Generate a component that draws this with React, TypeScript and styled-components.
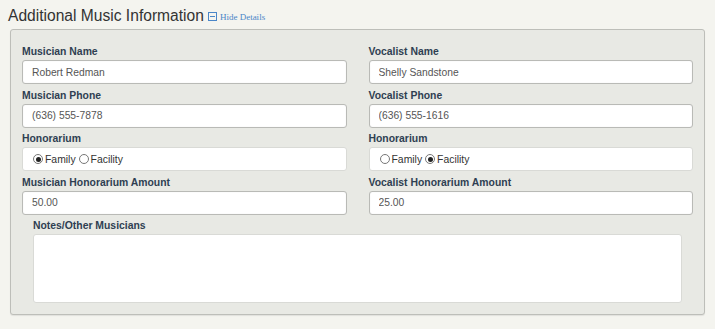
import React, { FunctionComponent } from 'react';
import styled, { createGlobalStyle } from 'styled-components';

const GlobalStyle = createGlobalStyle`
  html, body {
    margin: 0;
    padding: 0;
    background: #f4f4ef;
  }
  body {
    font-family: "Liberation Sans", Arial, sans-serif;
  }
`;

interface IRadioProps {
  checked?: boolean;
}

const Radio: FunctionComponent<IRadioProps & { label: string }> = ({ checked, label }) => (
  <RadioLabel>
    <RadioDot checked={checked} />
    {label}
  </RadioLabel>
);

interface IFieldProps {
  label: string;
  value: string;
}

const Field: FunctionComponent<IFieldProps> = ({ label, value }) => (
  <FieldBlock>
    <Label>{label}</Label>
    <TextInput readOnly value={value} />
  </FieldBlock>
);

const App: FunctionComponent = () => (
  <Page>
    <GlobalStyle />
    <TitleRow>
      <Title>Additional Music Information</Title>
      <HideLink href="#">
        <ToggleIcon />
        Hide Details
      </HideLink>
    </TitleRow>
    <Panel>
      <Columns>
        <div>
          <Field label="Musician Name" value="Robert Redman" />
          <Field label="Musician Phone" value="(636) 555-7878" />
          <FieldBlock>
            <Label>Honorarium</Label>
            <RadioBox>
              <Radio checked label="Family" />
              <Radio label="Facility" />
            </RadioBox>
          </FieldBlock>
          <Field label="Musician Honorarium Amount" value="50.00" />
        </div>
        <div>
          <Field label="Vocalist Name" value="Shelly Sandstone" />
          <Field label="Vocalist Phone" value="(636) 555-1616" />
          <FieldBlock>
            <Label>Honorarium</Label>
            <RadioBox>
              <Radio label="Family" />
              <Radio checked label="Facility" />
            </RadioBox>
          </FieldBlock>
          <Field label="Vocalist Honorarium Amount" value="25.00" />
        </div>
      </Columns>
      <Notes>
        <Label>Notes/Other Musicians</Label>
        <TextArea />
      </Notes>
    </Panel>
  </Page>
);

const Page = styled.div`
  padding: 6px 10px 14px 8px;
`;

const TitleRow = styled.div`
  display: flex;
  align-items: baseline;
  gap: 4px;
  height: 23px;
`;

const Title = styled.h2`
  margin: 0;
  font-size: 15.6px;
  font-weight: 400;
  color: #333;
  line-height: 20px;
`;

const HideLink = styled.a`
  display: inline-flex;
  align-items: center;
  gap: 2px;
  font-family: "Liberation Serif", "Times New Roman", serif;
  font-size: 9px;
  color: #4a86c8;
  text-decoration: none;
`;

const ToggleIcon = styled.span`
  position: relative;
  display: inline-block;
  width: 7px;
  height: 7px;
  border: 1px solid #4a86c8;
  margin-right: 1px;

  &::after {
    content: '';
    position: absolute;
    left: 1px;
    right: 1px;
    top: 3px;
    height: 1px;
    background: #4a86c8;
  }
`;

const Panel = styled.div`
  margin-left: 2px;
  background: #e8e9e4;
  border: 1px solid #bdbeb9;
  border-radius: 3px;
  box-shadow: 0 1px 1px rgba(0, 0, 0, 0.08);
  padding: 13px 11px 11px 11px;
  height: 286px;
  box-sizing: border-box;
`;

const Columns = styled.div`
  display: grid;
  grid-template-columns: 1fr 1fr;
  column-gap: 22px;
`;

const FieldBlock = styled.div`
  margin-bottom: 2.5px;
`;

const Label = styled.div`
  font-size: 10.4px;
  font-weight: 700;
  color: #2f3f52;
  line-height: 16px;
  padding-top: 1px;
  height: 16px;
  box-sizing: border-box;
  margin-bottom: 1px;
`;

const TextInput = styled.input`
  display: block;
  width: 100%;
  height: 24px;
  box-sizing: border-box;
  border: 1px solid #b9bab6;
  border-radius: 3px;
  box-shadow: inset 0 0 1px rgba(0, 0, 0, 0.15);
  background: #fff;
  padding: 0 9px;
  font-family: "Liberation Sans", Arial, sans-serif;
  font-size: 10.3px;
  color: #555;
  outline: none;
`;

const RadioBox = styled.div`
  display: flex;
  align-items: center;
  gap: 3px;
  height: 24px;
  box-sizing: border-box;
  background: #fff;
  border: 1px solid #d9dad6;
  border-radius: 3px;
  padding: 0 10px;
`;

const RadioLabel = styled.label`
  display: inline-flex;
  align-items: center;
  gap: 2px;
  font-size: 10.4px;
  color: #333;
`;

const RadioDot = styled.span<IRadioProps>`
  position: relative;
  width: 10px;
  height: 10px;
  box-sizing: border-box;
  border: 1px solid #777;
  border-radius: 50%;
  background: #fff;

  &::after {
    content: '';
    display: ${(p) => (p.checked ? 'block' : 'none')};
    position: absolute;
    left: 1.5px;
    top: 1.5px;
    width: 5px;
    height: 5px;
    border-radius: 50%;
    background: #222;
  }
`;

const Notes = styled.div`
  padding: 0 11px;
`;

const TextArea = styled.textarea`
  display: block;
  width: 100%;
  height: 69px;
  box-sizing: border-box;
  resize: none;
  background: #fff;
  border: 1px solid #d9dad6;
  border-radius: 3px;
  outline: none;
`;

export default App;
